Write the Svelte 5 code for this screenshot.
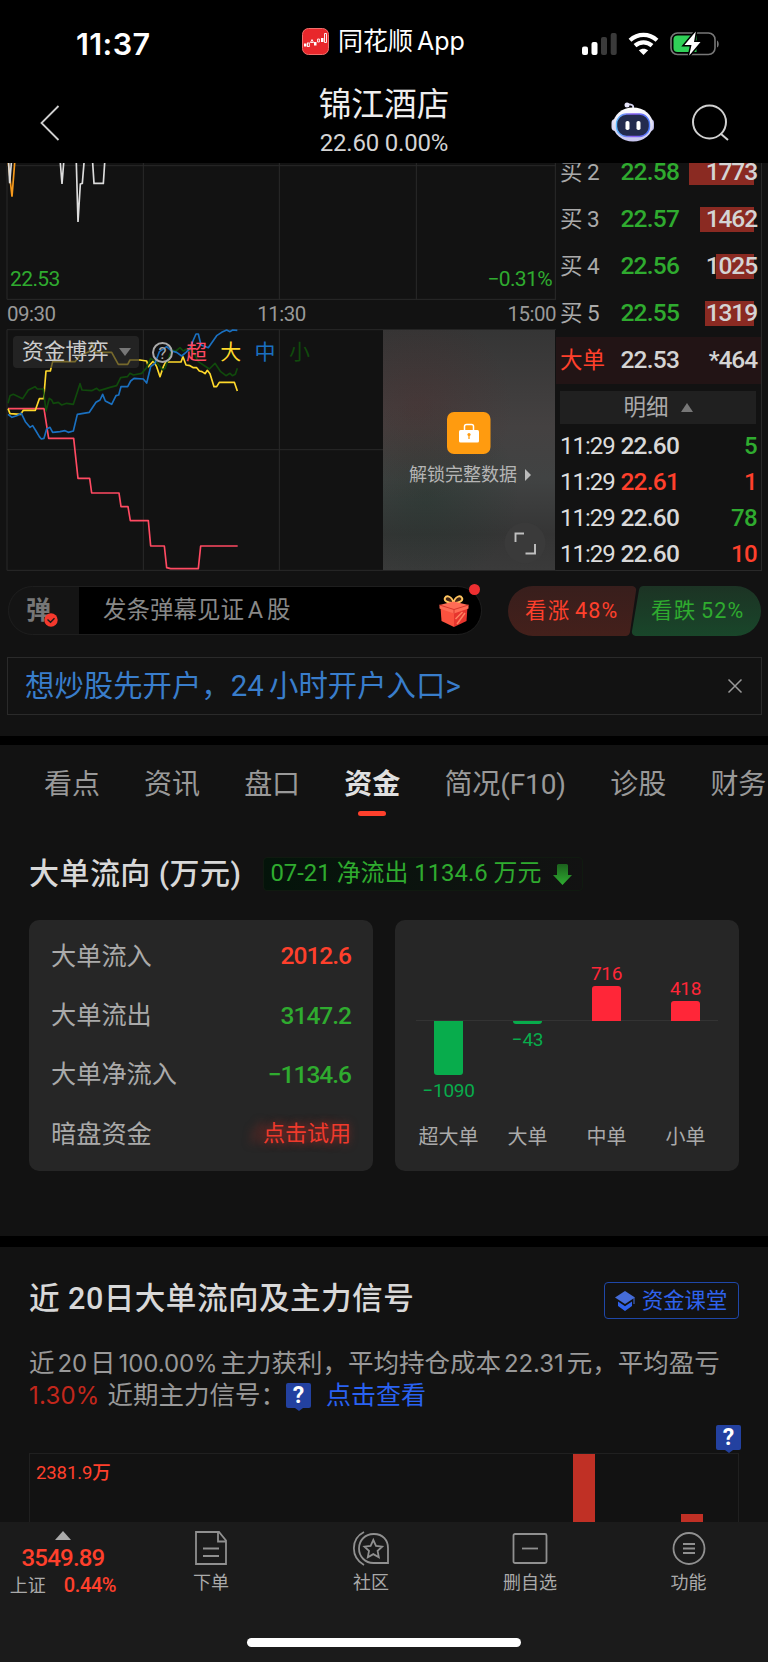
<script>
  const bids = [
    { label: '买 2', price: '22.58', volume: '1773', bar: 65 },
    { label: '买 3', price: '22.57', volume: '1462', bar: 54 },
    { label: '买 4', price: '22.56', volume: '1025', bar: 38 },
    { label: '买 5', price: '22.55', volume: '1319', bar: 49 }
  ];

  const ticks = [
    { time: '11:29', price: '22.60', volume: '5', tone: 'white', side: 'green' },
    { time: '11:29', price: '22.61', volume: '1', tone: 'red', side: 'red' },
    { time: '11:29', price: '22.60', volume: '78', tone: 'white', side: 'green' },
    { time: '11:29', price: '22.60', volume: '10', tone: 'white', side: 'red' }
  ];

  const tabs = ['看点', '资讯', '盘口', '资金', '简况(F10)', '诊股', '财务'];
  let active = $state('资金');

  const flows = [
    { name: '大单流入', value: '2012.6', tone: 'red' },
    { name: '大单流出', value: '3147.2', tone: 'green' },
    { name: '大单净流入', value: '−1134.6', tone: 'green' }
  ];

  const orders = [
    { name: '超大单', value: -1090, height: 54 },
    { name: '大单', value: -43, height: 2.5 },
    { name: '中单', value: 716, height: 35.5 },
    { name: '小单', value: 418, height: 20.5 }
  ];
</script>

<div class="phone">
  <header>
    <div class="status">
      <span class="clock">11:37</span>
      <span class="app">
        <svg width="27" height="27" viewBox="0 0 27 27">
          <rect x="0.5" y="0.5" width="26" height="26" rx="6" fill="#e8272b" stroke="#f0706c" />
          <g fill="#fff">
            <rect x="2" y="15.500" width="2.500" height="3" />
            <rect x="12" y="14" width="2.500" height="3.500" />
            <rect x="19" y="10" width="2.500" height="4" />
          </g>
          <g fill="none" stroke="#fff" stroke-width="0.900">
            <rect x="5.500" y="15" width="1.800" height="3.500" />
            <path d="M8.500 14.500l1.500-3 1.500 3zM15.600 11v3h1.800v-3zM22.500 5.500h2v9h-2z" />
          </g>
        </svg>
        同花顺 App
      </span>
      <svg class="signals" width="140" height="28" viewBox="0 0 140 28">
        <g fill="#fff">
          <rect x="2" y="16.500" width="6" height="8.500" rx="2" />
          <rect x="11.500" y="12" width="6" height="13" rx="2" />
        </g>
        <g fill="#3a3a3a">
          <rect x="21" y="7" width="6" height="18" rx="2" />
          <rect x="30.700" y="3" width="6" height="22" rx="2" />
        </g>
        <g fill="none" stroke="#fff" stroke-width="4.200">
          <path d="M50 10.200c8-7.200 19-7.200 27 0" />
          <path d="M55 15.700c5-4.400 12-4.400 17 0" />
        </g>
        <path d="M58.800 20.300c2.600-2.200 6.800-2.200 9.400 0l-4.700 4.700z" fill="#fff" />
        <rect x="91" y="3" width="44" height="21.500" rx="6.500" fill="none" stroke="#777" stroke-width="1.600" />
        <path d="M137 10.500c2.300 1 2.300 6 0 7z" fill="#777" />
        <path d="M97.500 5.500h19v16.500h-19a4 4 0 0 1-4-4v-8.500a4 4 0 0 1 4-4z" fill="#30d158" />
        <path d="M115.800 1.500L104.500 15h7l-2.300 10.500L120.500 12h-6.500z" fill="#fff" stroke="#000" stroke-width="3" paint-order="stroke" />
      </svg>
    </div>
    <div class="nav">
      <svg class="back" width="20" height="36" viewBox="0 0 20 36">
        <path d="M18.500 1L1.500 18l17 17" fill="none" stroke="#d0d0d0" stroke-width="1.800" />
      </svg>
      <div class="stock">
        <h1>锦江酒店</h1>
        <p>22.60 0.00%</p>
      </div>
      <svg class="robot" width="44" height="40" viewBox="0 0 44 40">
        <defs>
          <linearGradient id="shell" x2="0" y2="1"><stop stop-color="#fff" /><stop offset="1" stop-color="#c6c4ee" /></linearGradient>
          <linearGradient id="rim"><stop stop-color="#5ab8ff" /><stop offset="0.500" stop-color="#8a5cf0" /><stop offset="1" stop-color="#4d7dff" /></linearGradient>
        </defs>
        <path d="M22 6c1-3-2-4-5-3.500" fill="none" stroke="#d8d6f2" stroke-width="1.800" />
        <circle cx="16" cy="3" r="2.500" fill="#e6e4fa" />
        <rect x="0.500" y="17" width="8" height="12" rx="4" fill="#dad9f6" />
        <rect x="35" y="17" width="8" height="12" rx="4" fill="#b8b6e6" />
        <ellipse cx="22" cy="22.500" rx="20" ry="17" fill="url(#shell)" />
        <rect x="5.500" y="12" width="33" height="22.500" rx="10" fill="#232b4e" stroke="url(#rim)" stroke-width="1.400" />
        <rect x="14.500" y="19" width="4" height="9" rx="1.800" fill="#fff" />
        <rect x="25.500" y="19" width="4" height="9" rx="1.800" fill="#fff" />
      </svg>
      <svg class="search" width="38" height="38" viewBox="0 0 38 38" fill="none" stroke="#d0d0d0" stroke-width="2">
        <circle cx="17.500" cy="18" r="16.500" />
        <path d="M28.500 29.500l7.500 6.500" />
      </svg>
    </div>
  </header>

  <section class="market">
    <div class="charts">
      <div class="price-chart">
        <svg width="556" height="137" viewBox="0 9 1668 411" fill="none">
          <path d="M21 17H1668M21 418H1668M21 17V418M430 9V418M838 9V418M1249 9V418M1666 9V418" stroke="#292929" stroke-width="3" />
          <path d="M25 9L36 110L44 9" stroke="#f79a1c" stroke-width="5" />
          <path d="M26 9L29 70L34 9M181 9L186 72L191 9M229 9L234 186L241 72L247 70L252 9M278 9L282 70H310L314 9" stroke="#dcdcdc" stroke-width="5" />
        </svg>
        <span class="low">22.53</span>
        <span class="percent">−0.31%</span>
      </div>
      <div class="times"><span>09:30</span><span>11:30</span><span>15:00</span></div>
      <div class="flow-chart">
        <svg width="556" height="242" viewBox="0 12 1668 726" fill="none" stroke-width="5" stroke-linejoin="round">
          <path d="M21 14H1668M21 374H1150M21 736H1668M21 14V736M430 14V736M838 14V736" stroke="#292929" stroke-width="3" />
          <path stroke="#ff4a62" d="M24 251H132L146 340H221L234 460H269L275 504H357L363 545H384L391 587H445L452 663H493L500 728L512 731H595L602 663H713" />
          <path stroke="#ffd92b" d="M24 251L30 266L62 268L70 256H106L118 221H131L138 138H151L158 110H225L240 90L268 80L275 52L285 82H335L355 118H383L390 105H420L440 108L445 125L460 108L470 125L480 155L490 125L497 111H543L549 95L558 120L570 122L580 128H590L598 138L606 140L615 146L622 136L630 146L642 185H650L658 172H703L712 198" />
          <path stroke="#104a0c" d="M24 235L30 212L40 208L68 221L85 195L105 185L112 192H130L138 258L148 220L155 225L160 235L175 232L185 240L200 235L220 238L240 176L246 195L275 197L290 190L298 197L330 187L350 182L362 158L382 155L390 145L400 150L425 145L440 128L452 100L470 112L488 135L495 130L515 75L528 78L540 68L550 78L560 72L580 80L595 110L610 120L628 132L645 115L662 140L678 152L690 145L697 152L706 148L712 130" />
          <path stroke="#1a70c0" d="M24 268L36 277L50 272L64 265L76 290L90 307L98 302L108 318L118 335L124 342L132 340L140 312L150 307L158 322L180 320L195 317L205 322L220 318L232 268L268 262L288 232L300 225L308 208L316 228L335 238L348 212L356 210L363 185H383L392 168L402 160L430 162L440 174L452 125L465 115L478 80L500 65L515 78L530 82L545 93L558 82L570 70L580 45L588 27H595L603 60L625 68L650 32L665 22L680 15L690 20L698 15L712 16" />
        </svg>
        <div class="legend">
          <span class="chip">资金博弈<i class="down"></i></span>
          <span class="help">?</span>
          <b class="super">超</b><b class="large">大</b><b class="mid">中</b><b class="small">小</b>
        </div>
        <div class="locked">
          <svg width="44" height="42" viewBox="0 0 44 42">
            <rect width="43.500" height="42" rx="7" fill="#ff9b0f" />
            <rect x="12" y="18" width="20" height="12.500" rx="1.500" fill="#fff" />
            <path d="M17.500 18v-3.500a2 2 0 0 1 2-2h5a2 2 0 0 1 2 2V18" fill="none" stroke="#fff" stroke-width="1.500" />
            <circle cx="22" cy="22.500" r="1.600" fill="#ff9b0f" />
            <path d="M22 23v4" stroke="#ff9b0f" stroke-width="1.300" />
          </svg>
          <p>解锁完整数据<i class="next"></i></p>
          <svg class="expand" width="42" height="42" viewBox="0 0 42 42" fill="none">
            <circle cx="21" cy="21" r="20.500" fill="#3a3a3a" />
            <path d="M11.500 20v-8.500H20M31 22v9.500h-9.500" stroke="#c0c0c0" stroke-width="1.900" />
          </svg>
        </div>
      </div>
    </div>

    <div class="book">
      {#each bids as bid}
        <div class="bid">
          <span class="label">{bid.label}</span>
          <span class="green num">{bid.price}</span>
          <span class="volume"><i style="width: {bid.bar}px"></i><em>{bid.volume}</em></span>
        </div>
      {/each}
      <div class="bid big">
        <span class="label">大单</span>
        <span class="num">22.53</span>
        <span class="volume"><em>*464</em></span>
      </div>
      <div class="detail">明细 <i class="up"></i></div>
      {#each ticks as tick}
        <div class="tick">
          <span class="time">{tick.time}</span>
          <span class="num {tick.tone}">{tick.price}</span>
          <span class="end {tick.side}">{tick.volume}</span>
        </div>
      {/each}
    </div>
  </section>

  <section class="barrage">
    <div class="input">
      <div class="switch">
        <strong>弹</strong>
        <svg width="14" height="14" viewBox="0 0 14 14">
          <circle cx="7" cy="7" r="6.700" fill="#f5392d" />
          <path d="M3.500 6.500L6.500 9.300L10.500 5.300" fill="none" stroke="#1a1a1a" stroke-width="1.400" />
        </svg>
      </div>
      <span class="hint">发条弹幕见证 A 股</span>
      <svg class="gift" width="30" height="32" viewBox="0 0 30 32">
        <path d="M14.500 8C9 8 4.500 6 6 3s7-2 8.500 5c1.500-7 7-8 8.500-5s-3 5-8.500 5z" fill="#412415" stroke="#ffc660" stroke-width="1.900" />
        <path d="M1.500 12L15 18v14L2.500 26z" fill="#fa513e" />
        <path d="M28.500 12L15 18v14l12.500-6z" fill="#e7352e" />
        <path d="M0.500 10L14.500 6.500L29.500 10v3.500L15 18.500L0.500 13.500z" fill="#ff6c55" />
        <path d="M0.500 10L15 14.500L29.500 10M15 14.500v4" fill="none" stroke="#d8382e" />
        <path d="M18 29l8-11M16.500 24l7-7" stroke="#ff8160" stroke-width="1.500" />
      </svg>
      <i class="dot"></i>
    </div>
    <div class="votes">
      <svg width="253" height="50" viewBox="0 0 253 50">
        <defs>
          <linearGradient id="rise" x2="0" y2="1"><stop stop-color="#381e1c" /><stop offset="1" stop-color="#44201b" /></linearGradient>
          <linearGradient id="fall" x2="0" y2="1"><stop stop-color="#1c3324" /><stop offset="1" stop-color="#19462a" /></linearGradient>
        </defs>
        <path d="M25 0H124a4 4 0 0 1 4 5L122 46a5 5 0 0 1-5 4H25a25 25 0 0 1 0-50z" fill="url(#rise)" />
        <path d="M136 0h92a25 25 0 0 1 0 50H128a4 4 0 0 1-4-5L131 4a5 5 0 0 1 5-4z" fill="url(#fall)" />
      </svg>
      <span class="up-vote red">看涨 48%</span>
      <span class="down-vote green">看跌 52%</span>
    </div>
  </section>

  <section class="promo">
    <a href="#open">想炒股先开户，24 小时开户入口&gt;</a>
    <svg width="16" height="16" viewBox="0 0 16 16"><path d="M1.500 1.500l13 13m0-13l-13 13" stroke="#999" stroke-width="1.500" /></svg>
  </section>

  <div class="gap first"></div>

  <nav class="tabs">
    {#each tabs as tab}
      <button class:active={tab === active} onclick={() => (active = tab)}>{tab}</button>
    {/each}
  </nav>

  <section class="capital">
    <div class="heading">
      <h2>大单流向 (万元)</h2>
      <span class="badge">
        07-21 净流出 1134.6 万元
        <svg width="19" height="21" viewBox="0 0 19 21">
          <defs><linearGradient id="arrow" x2="0" y2="1"><stop stop-color="#1c611d" /><stop offset="1" stop-color="#2fae31" /></linearGradient></defs>
          <path d="M4 1.500q0-1.500 1.500-1.500h8q1.500 0 1.500 1.500V11h4L9.500 21L0 11h4z" fill="url(#arrow)" />
        </svg>
      </span>
    </div>
    <div class="cards">
      <div class="card list">
        {#each flows as flow}
          <div><span>{flow.name}</span><strong class={flow.tone}>{flow.value}</strong></div>
        {/each}
        <div><span>暗盘资金</span><a class="trial" href="#trial">点击试用</a></div>
      </div>
      <div class="card bars">
        {#each orders as order}
          <div class="order" class:minus={order.value < 0}>
            <div class="above">
              {#if order.value > 0}
                <em>{order.value}</em>
                <i style="height: {order.height}px"></i>
              {/if}
            </div>
            <div class="below">
              {#if order.value < 0}
                <i style="height: {order.height}px"></i>
                <em>−{-order.value}</em>
              {/if}
            </div>
            <span>{order.name}</span>
          </div>
        {/each}
      </div>
    </div>
  </section>

  <div class="gap second"></div>

  <section class="signal">
    <div class="title">
      <h2>近 20日大单流向及主力信号</h2>
      <a class="lesson" href="#lesson">
        <svg width="20" height="20" viewBox="0 0 20 20">
          <path d="M10 0L20 6.500L10 13L0 6.500z" fill="#456cd8" />
          <path d="M3 10.500l7 4.700l7-4.700v4.500L10 20L3 15z" fill="#2f62ec" />
          <path d="M19 7v6" stroke="#456cd8" />
        </svg>
        资金课堂
      </a>
    </div>
    <div class="summary">
      <p>近<span class="n">20</span>日<span class="n">100.00%</span>主力获利，平均持仓成本<span class="n">22.31</span>元，平均盈亏</p>
      <p><span class="loss">1.30%</span>近期主力信号：<span class="mark">?</span><a href="#view">点击查看</a></p>
    </div>
    <div class="history">
      <span class="max">2381.9万</span>
      <i class="bar tall"></i>
      <i class="bar short"></i>
      <span class="mark corner">?</span>
    </div>
  </section>

  <footer>
    <div class="index">
      <i class="up"></i>
      <strong>3549.89</strong>
      <p>上证<b>0.44%</b></p>
    </div>
    <div class="actions">
      <div>
        <svg width="36" height="36" viewBox="0 0 36 36">
          <path d="M5 2h21l7 8.500V34H3V2h4M25 2v9.500h8M10 18.500h16M10 26h16" />
        </svg>
        下单
      </div>
      <div>
        <svg width="40" height="36" viewBox="0 0 40 36">
          <path d="M22.500 4H23c9 0 14 6.500 14 14v15H22.500C14 33 8 26.500 8 18.500S14 4 22.500 4z" />
          <path d="M13 2C-0.500 9-0.500 27 13 35" />
          <path d="M22.300 10l2.700 5.800l6.200.8l-4.600 4.300l1.200 6.300l-5.500-3.100l-5.500 3.100l1.200-6.300l-4.600-4.300l6.200-.8z" />
        </svg>
        社区
      </div>
      <div>
        <svg width="36" height="36" viewBox="0 0 36 36">
          <rect x="1.500" y="4" width="33" height="29" rx="1.500" />
          <path d="M10 18.500h16" />
        </svg>
        删自选
      </div>
      <div>
        <svg width="36" height="36" viewBox="0 0 36 36">
          <circle cx="18" cy="18.500" r="15.500" />
          <path d="M12 14h12M12 18.500h12M12 23h12" />
        </svg>
        功能
      </div>
    </div>
    <div class="home"></div>
  </footer>
</div>

<style>
  :global(body) {
    background: #121212;
  }

  .phone {
    width: 768px;
    height: 1662px;
    display: flex;
    flex-direction: column;
    overflow: hidden;
    background: #121212;
    color: #d4d4d4;
    font-family: Roboto, 'Noto Sans CJK SC', sans-serif;
    font-weight: 400;
    line-height: 1;
  }

  .phone * {
    box-sizing: border-box;
  }

  .phone > * {
    flex-shrink: 0;
  }

  h1, h2, p {
    margin: 0;
    font-weight: inherit;
  }

  a {
    text-decoration: none;
  }

  i, em, b {
    font-style: normal;
    font-weight: inherit;
  }

  svg {
    display: block;
    flex-shrink: 0;
  }

  span, p, a {
    white-space: nowrap;
  }

  .red { color: #ff402c; }
  .green { color: #2fab2f; }
  .white { color: #d8d8d8; }

  .up, .down, .next {
    width: 0;
    height: 0;
    border: 6px solid transparent;
  }

  .up {
    border-top: 0;
    border-bottom: 9px solid #777;
  }

  .down {
    border-bottom: 0;
    border-top: 8px solid #777;
  }

  .next {
    border-right: 0;
    border-left: 6px solid #bbb;
  }

  header {
    height: 163px;
    background: #000;
  }

  .status {
    display: grid;
    grid-template-columns: 302px 278px 140px;
    height: 82px;
    align-items: center;
    color: #fff;
  }

  .clock {
    margin: 5px 0 0 76px;
    font: 600 30.500px Inter, sans-serif;
    letter-spacing: 0.4px;
  }

  .app {
    display: flex;
    align-items: center;
    gap: 9px;
    font-size: 25px;
    word-spacing: -3px;
    font-family: Inter, 'Noto Sans CJK SC', sans-serif;
  }

  .signals {
    margin-top: 5px;
  }

  .nav {
    display: grid;
    grid-template-columns: 157px 454px 44px 37px 38px;
    height: 81px;
  }

  .back {
    margin: 23px 0 0 40px;
  }

  .stock {
    text-align: center;
  }

  .stock h1 {
    margin-top: 5px;
    font-size: 32.700px;
    line-height: 36px;
    color: #eee;
  }

  .stock p {
    margin-top: 7px;
    font-size: 24px;
    line-height: 26px;
    letter-spacing: -0.2px;
  }

  .robot {
    margin-top: 20px;
  }

  .search {
    grid-column: 5;
    margin-top: 22px;
  }

  .market {
    display: flex;
    height: 408px;
    overflow: hidden;
  }

  .charts {
    width: 556px;
    flex-shrink: 0;
  }

  .price-chart, .flow-chart {
    position: relative;
  }

  .low, .percent {
    position: absolute;
    bottom: 10px;
    font-size: 21px;
    letter-spacing: -0.6px;
    color: #2fab2f;
  }

  .low { left: 10px; }
  .percent { right: 4px; }

  .times {
    display: flex;
    justify-content: space-between;
    height: 29px;
    align-items: center;
    padding-left: 7px;
    font-size: 20.500px;
    letter-spacing: -0.5px;
    color: #999;
  }

  .legend {
    position: absolute;
    top: 7px;
    left: 13px;
    display: flex;
    align-items: center;
    height: 32px;
    font-size: 21px;
  }

  .chip {
    display: flex;
    align-items: center;
    width: 126px;
    height: 32px;
    padding-left: 9px;
    gap: 10px;
    border-radius: 4px;
    background: rgba(45, 45, 45, 0.65);
    font-size: 21.700px;
    color: #ccc;
  }

  .help {
    width: 21px;
    height: 21px;
    margin: 0 13px;
    border: 2px solid #aaa;
    border-radius: 50%;
    text-align: center;
    line-height: 18px;
    font-size: 17px;
    color: #aaa;
  }

  .legend b {
    width: 34.300px;
  }

  .super { color: #ff4a62; }
  .large { color: #ffd92b; }
  .mid { color: #1a70c0; }
  .small { color: #104a0c; }

  .locked {
    position: absolute;
    top: 1px;
    right: 1px;
    width: 172px;
    height: 240px;
    padding-top: 82px;
    display: flex;
    flex-direction: column;
    align-items: center;
    background:
      radial-gradient(circle at 20% 32%, rgba(90, 30, 30, 0.2), transparent 45%),
      radial-gradient(circle at 25% 68%, rgba(20, 50, 38, 0.3), transparent 45%),
      linear-gradient(#353535, #444141 40%, #414343 62%, #353535 85%, #3a3a3a);
  }

  .locked p {
    display: flex;
    align-items: center;
    gap: 8px;
    margin: 12px 0 0 2px;
    font-size: 18px;
    color: #b5b5b5;
  }

  .expand {
    position: absolute;
    right: 9px;
    bottom: 6px;
  }

  .book {
    width: 206px;
    height: 408px;
    overflow: hidden;
    display: flex;
    flex-direction: column;
    border-right: 1px solid #292929;
    border-bottom: 1px solid #292929;
  }

  .bid {
    display: grid;
    grid-template-columns: 60.500px 62px 1fr;
    align-items: center;
    flex-shrink: 0;
    height: 47px;
    padding: 0 4px;
    font-size: 24px;
  }

  .bid:first-child {
    margin-top: -14px;
  }

  .bid .label {
    font-size: 22.500px;
    word-spacing: -1px;
    color: #aaa;
  }

  .num {
    font-size: 24.500px;
    font-weight: 500;
    letter-spacing: -0.8px;
  }

  .volume {
    position: relative;
    display: flex;
    height: 25px;
    align-items: center;
    justify-content: flex-end;
    font-size: 24.500px;
    font-weight: 500;
    letter-spacing: -1.100px;
  }

  .volume i {
    position: absolute;
    top: 0;
    bottom: 0;
    right: 3px;
    background: #8a2a22;
  }

  .volume em {
    position: relative;
  }

  .big {
    background: #221415;
  }

  .bid.big .label {
    color: #ff402c;
  }

  .detail {
    display: flex;
    flex-shrink: 0;
    align-items: center;
    justify-content: center;
    gap: 12px;
    height: 33px;
    margin: 7px 5px 4px 4px;
    background: #202020;
    font-size: 22.500px;
    color: #aaa;
  }

  .tick {
    display: grid;
    grid-template-columns: 60.500px 62px 1fr;
    align-items: center;
    flex-shrink: 0;
    height: 36px;
    padding: 0 4px;
    font-size: 24px;
    font-weight: 500;
  }

  .time {
    font-size: 24px;
    letter-spacing: -1px;
    color: #ddd;
    font-weight: 450;
  }

  .end {
    text-align: right;
    letter-spacing: -0.6px;
  }

  .barrage {
    display: flex;
    height: 86px;
    padding: 15px 7px 0 8px;
    justify-content: space-between;
  }

  .input {
    position: relative;
    display: flex;
    align-items: center;
    width: 474px;
    height: 49px;
    border: 1.500px solid #1e1e1e;
    border-radius: 25px;
    background: linear-gradient(90deg, #141414 70px, #000 70px);
  }

  .switch {
    position: relative;
    width: 94px;
    padding-left: 17px;
  }

  .switch strong {
    font-size: 25px;
    font-weight: 700;
    color: #777;
  }

  .switch svg {
    position: absolute;
    left: 35px;
    top: 15px;
  }

  .hint {
    flex: 1;
    font-size: 23.500px;
    word-spacing: -2px;
    color: #888;
  }

  .gift {
    margin-right: 12px;
  }

  .dot {
    position: absolute;
    top: -3px;
    right: 1px;
    width: 11px;
    height: 11px;
    border-radius: 50%;
    background: #ed2f31;
  }

  .votes {
    display: grid;
    grid-template-columns: 126px 127px;
    grid-template-rows: 50px;
    height: 50px;
    align-items: center;
    font-size: 21.500px;
    letter-spacing: 1.200px;
    word-spacing: -2px;
  }

  .votes svg {
    grid-area: 1 / 1 / 2 / 3;
  }

  .votes span {
    padding-left: 17px;
  }

  .up-vote {
    grid-area: 1 / 1;
  }

  .down-vote {
    grid-area: 1 / 2;
  }

  .promo {
    display: flex;
    align-items: center;
    justify-content: space-between;
    width: 755px;
    height: 58px;
    margin-left: 7px;
    padding: 0 18px 0 17px;
    border: 1.500px solid #2a2a2a;
  }

  .promo a {
    padding-top: 2px;
    font-size: 29.400px;
    word-spacing: -2px;
    color: #397dcb;
  }

  .gap {
    background: #000;
  }

  .first {
    height: 9px;
    margin-top: 21px;
  }

  .second {
    height: 11px;
    margin-top: 65px;
  }

  .tabs {
    display: flex;
    gap: 44.300px;
    height: 84px;
    padding: 22px 0 0 44px;
    overflow: hidden;
  }

  button {
    position: relative;
    flex-shrink: 0;
    height: 50px;
    padding: 0 0 14px;
    border: 0;
    background: none;
    font: inherit;
    font-size: 28px;
    letter-spacing: -0.1px;
    white-space: nowrap;
    color: #999;
  }

  .active {
    color: #e0e0e0;
    font-weight: 600;
  }

  .active::after {
    content: '';
    position: absolute;
    left: 14px;
    bottom: 1px;
    width: 28px;
    height: 5.500px;
    border-radius: 3px;
    background: #ff402c;
  }

  .capital {
    padding: 28px 29px 0;
  }

  .heading {
    display: flex;
    align-items: center;
    gap: 22px;
    height: 34px;
  }

  h2 {
    font-size: 30px;
    font-weight: 500;
    letter-spacing: 0.450px;
    color: #d8d8d8;
  }

  .badge {
    display: flex;
    align-items: center;
    gap: 12px;
    width: 320px;
    height: 34px;
    padding-left: 6px;
    border: 1px solid #101a10;
    border-radius: 4px;
    background: linear-gradient(90deg, #04140a, #121212);
    font-size: 23.900px;
    color: #2fab2f;
  }

  .cards {
    display: flex;
    justify-content: space-between;
    margin-top: 29px;
  }

  .card {
    width: 344px;
    height: 251px;
    border-radius: 10px;
    background: #262626;
  }

  .list {
    padding: 7px 22px;
    font-size: 25.200px;
    color: #aaa;
  }

  .list div {
    display: flex;
    align-items: center;
    justify-content: space-between;
    height: 59.200px;
  }

  .list strong {
    font-weight: 500;
    font-size: 24.500px;
    letter-spacing: -1px;
  }

  .trial {
    font-size: 22px;
    color: #f03a2c;
    text-shadow: 0 0 9px #8a2a26, -14px 0 9px #702824;
  }

  .bars {
    display: grid;
    grid-template-columns: repeat(4, 79px);
    justify-content: center;
    background: linear-gradient(#333, #333) 21px 100px / 302px 1px no-repeat #262626;
  }

  .order {
    display: flex;
    flex-direction: column;
    align-items: center;
    color: #ff2638;
    font-size: 19px;
  }

  .order em {
    font-weight: 450;
    letter-spacing: -0.3px;
  }

  .minus {
    color: #08ac4c;
  }

  .order i {
    width: 29px;
    border-radius: 3px 3px 0 0;
    background: #ff2638;
  }

  .minus i {
    border-radius: 0 0 3px 3px;
    background: #08ac4c;
  }

  .above {
    height: 101px;
    display: flex;
    flex-direction: column;
    align-items: center;
    justify-content: flex-end;
    gap: 3px;
  }

  .below {
    height: 106px;
    display: flex;
    flex-direction: column;
    align-items: center;
    gap: 6px;
  }

  .order span {
    font-size: 20px;
    color: #aaa;
  }

  .signal {
    height: 275px;
    padding: 35px 29px 0;
  }

  .title {
    display: flex;
    justify-content: space-between;
    height: 37px;
    align-items: center;
  }

  .title h2 {
    padding-bottom: 3px;
    font-size: 30.600px;
  }

  .lesson {
    display: flex;
    align-items: center;
    gap: 7px;
    width: 135px;
    height: 37px;
    padding-left: 10px;
    border: 1.500px solid #1f47a8;
    border-radius: 4px;
    font-size: 21.300px;
    color: #2f62ec;
  }

  .summary {
    margin-top: 28px;
    font-size: 25.500px;
    color: #999;
  }

  .summary p {
    display: flex;
    align-items: center;
    height: 32.500px;
  }

  .n {
    margin: 0 3px;
    font: 400 24px Inter, sans-serif;
    letter-spacing: -0.1px;
  }

  .loss {
    margin-right: 8px;
    font: 400 24px Inter, sans-serif;
    letter-spacing: 0.2px;
    color: #c2271c;
  }

  .summary a {
    margin-left: 15px;
    font-size: 25px;
    color: #2a62f2;
  }

  .mark {
    position: relative;
    width: 25px;
    height: 25px;
    border-radius: 2px;
    background: #2341a0;
    color: #fff;
    text-align: center;
    line-height: 25px;
    font-size: 23px;
    font-weight: 700;
  }

  .mark::after {
    content: '';
    position: absolute;
    left: 9px;
    top: 25px;
    border: 4px solid transparent;
    border-bottom: 0;
    border-top: 3px solid #2341a0;
  }

  .history {
    position: relative;
    height: 69px;
    margin-top: 41px;
    border: 1px solid #202020;
    border-bottom: 0;
  }

  .max {
    display: block;
    padding: 10px 0 0 6px;
    font-size: 18.500px;
    letter-spacing: -0.1px;
    font-weight: 450;
    color: #ff402c;
  }

  .bar {
    position: absolute;
    bottom: 0;
    width: 22px;
    background: #c03025;
  }

  .tall {
    left: 543px;
    height: 68px;
  }

  .short {
    left: 651px;
    height: 8px;
  }

  .mark.corner {
    position: absolute;
    top: -29px;
    right: -3px;
  }

  footer {
    flex: 1;
    display: grid;
    grid-template-columns: 128px 1fr;
    grid-template-rows: 116px 24px;
    background: #1b1b1b;
    color: #aaa;
    border-bottom: 1px solid #666;
  }

  .index {
    display: flex;
    flex-direction: column;
    align-items: center;
    padding: 9px 2px 0 0;
  }

  .index .up {
    border-width: 0 8px 9px;
    border-bottom-color: #aaa;
  }

  .index strong {
    margin-top: 6px;
    font-size: 24px;
    font-weight: 500;
    letter-spacing: -0.8px;
    color: #ff402c;
  }

  .index p {
    margin-top: 5px;
    font-size: 18px;
  }

  .index b {
    margin-left: 18px;
    font-size: 20px;
    font-weight: 500;
    letter-spacing: -0.4px;
    color: #ff402c;
  }

  .actions {
    display: grid;
    grid-template-columns: 160px 160px 158px 159px;
    margin-left: 3px;
  }

  .actions div {
    display: flex;
    flex-direction: column;
    align-items: center;
    gap: 8px;
    padding-top: 8px;
    font-size: 18px;
  }

  .actions svg {
    fill: none;
    stroke: #909090;
    stroke-width: 1.800;
  }

  .home {
    grid-column: 1 / 3;
    width: 274px;
    height: 9px;
    margin: 0 auto;
    border-radius: 5px;
    background: #fff;
  }
</style>
